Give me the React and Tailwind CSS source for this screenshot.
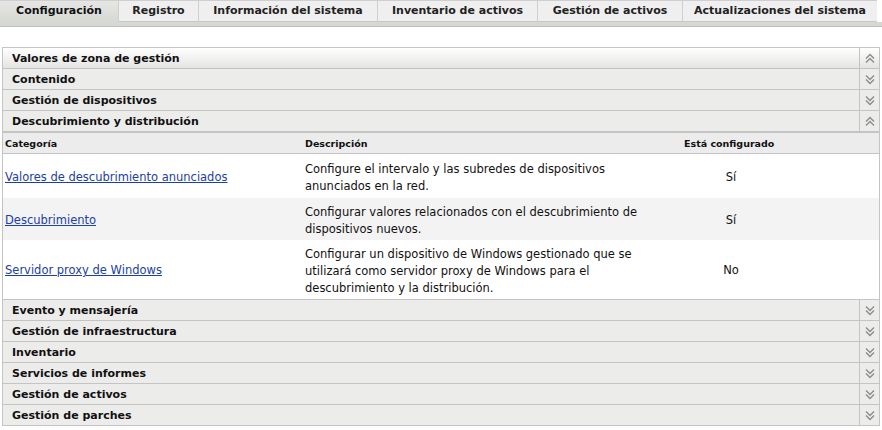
import React from "react";

const font = { fontFamily: '"DejaVu Sans", "Liberation Sans", sans-serif' };

function Chevrons({ up }) {
  return (
    <svg width="10" height="11" viewBox="0 0 10 11">
      {up ? (
        <g fill="none" stroke="#8c8c8c" strokeWidth="1.4">
          <polyline points="1,5.5 5,1.5 9,5.5" />
          <polyline points="1,9.5 5,5.5 9,9.5" />
        </g>
      ) : (
        <g fill="none" stroke="#8c8c8c" strokeWidth="1.4">
          <polyline points="1,1.5 5,5.5 9,1.5" />
          <polyline points="1,5.5 5,9.5 9,5.5" />
        </g>
      )}
    </svg>
  );
}

function Header({ title, up, first }) {
  return (
    <div
      className={
        "flex h-[21px] border-b border-[#c4c4c4] " +
        (first ? "bg-gradient-to-b from-[#ffffff] to-[#e4e4e2]" : "bg-[#ececea]")
      }
    >
      <div className="flex-1 flex items-center pl-[9px] pt-[3px] text-[11px] font-bold text-[#111]">
        {title}
      </div>
      <div className="w-[20px] flex items-center justify-center border-l border-[#c4c4c4]">
        <Chevrons up={up} />
      </div>
    </div>
  );
}

const tabs = [
  ["Configuración", 118, true],
  ["Registro", 80],
  ["Información del sistema", 179],
  ["Inventario de activos", 160],
  ["Gestión de activos", 145],
  ["Actualizaciones del sistema", 195],
];

const rows = [
  {
    cat: "Valores de descubrimiento anunciados",
    desc: ["Configure el intervalo y las subredes de dispositivos", "anunciados en la red."],
    val: "Sí",
    h: "h-[44px]",
    bg: "bg-white",
  },
  {
    cat: "Descubrimiento",
    desc: ["Configurar valores relacionados con el descubrimiento de", "dispositivos nuevos."],
    val: "Sí",
    h: "h-[42px]",
    bg: "bg-[#f3f3f3]",
  },
  {
    cat: "Servidor proxy de Windows",
    desc: [
      "Configurar un dispositivo de Windows gestionado que se",
      "utilizará como servidor proxy de Windows para el",
      "descubrimiento y la distribución.",
    ],
    val: "No",
    h: "h-[59px]",
    bg: "bg-white",
  },
];

export default function App() {
  return (
    <div className="w-[882px] h-[430px] bg-white overflow-hidden text-[#111]" style={font}>
      <div className="flex h-[22px] bg-white">
        {tabs.map(([t, w, active]) => (
          <div
            key={t}
            style={{ width: w }}
            className={
              "flex items-center justify-center text-[11px] font-bold border-t border-[#cfcfcf] " +
              (active
                ? "bg-gradient-to-b from-[#e6e7e4] to-[#d6d8d3] text-[#111]"
                : "bg-[#efefef] border-l border-[#c8c8c8] border-b border-b-[#c8c8c8] text-[#222]")
            }
          >
            {t}
          </div>
        ))}
        <div className="flex-1" />
      </div>
      <div className="h-[5px] bg-[#d6d8d3] border-b border-[#bdbdbd]" />

      <div className="mt-[20px] ml-[2px] w-[878px] border border-[#c4c4c4] border-b-0">
        <Header title="Valores de zona de gestión" up first />
        <Header title="Contenido" />
        <Header title="Gestión de dispositivos" />
        <Header title="Descubrimiento y distribución" up />

        <div className="border-t border-[#c4c4c4]" />
        <div className="grid grid-cols-[297px_381px_100px_1fr] h-[21px] bg-[#ececec] border-b border-[#c4c4c4] text-[9.5px] font-bold items-center pt-[3px]">
          <div className="pl-[2px]">Categoría</div>
          <div className="pl-[5px]">Descripción</div>
          <div className="pl-[3px] whitespace-nowrap">Está configurado</div>
          <div />
        </div>

        {rows.map((r) => (
          <div
            key={r.cat}
            className={"grid grid-cols-[297px_381px_100px_1fr] items-center text-[11.5px] pt-[3px] " + r.h + " " + r.bg}
          >
            <div className="pl-[2px]">
              <span className="text-[#1b40a6] underline">{r.cat}</span>
            </div>
            <div className="pl-[5px] leading-[17px]">
              {r.desc.map((d) => (
                <div key={d}>{d}</div>
              ))}
            </div>
            <div className="text-center">{r.val}</div>
            <div />
          </div>
        ))}

        <div className="border-t border-[#c4c4c4]" />
        <Header title="Evento y mensajería" />
        <Header title="Gestión de infraestructura" />
        <Header title="Inventario" />
        <Header title="Servicios de informes" />
        <Header title="Gestión de activos" />
        <Header title="Gestión de parches" />
      </div>
    </div>
  );
}
